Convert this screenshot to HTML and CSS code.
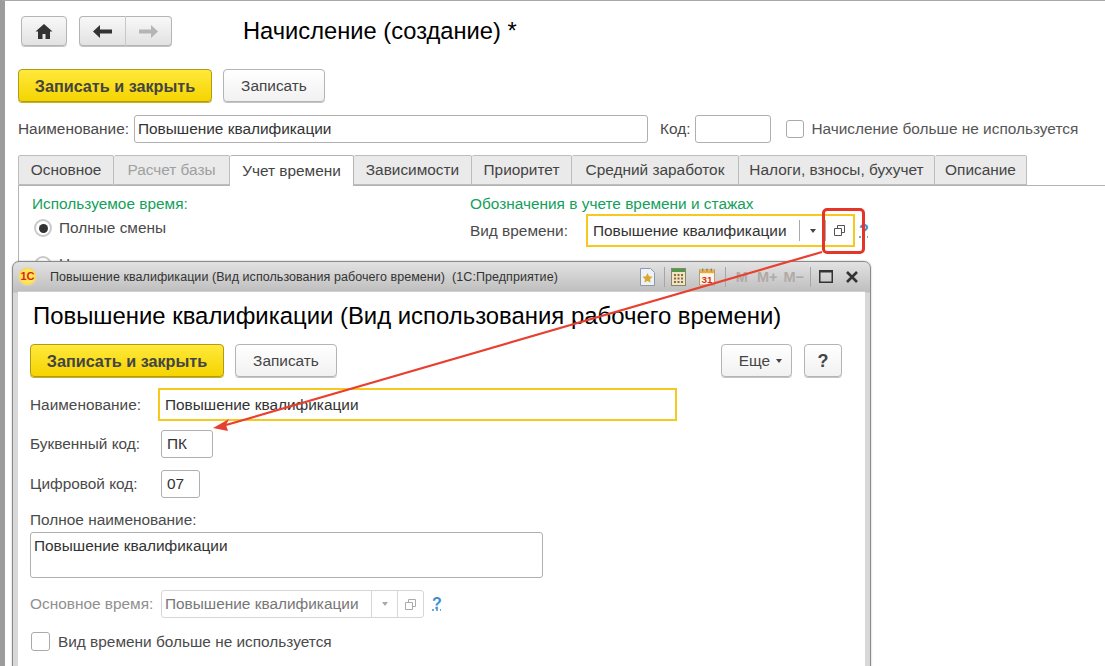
FILE: index.html
```html
<!DOCTYPE html>
<html lang="ru">
<head>
<meta charset="utf-8">
<title>Начисление</title>
<link rel="stylesheet" href="styles.css">
</head>
<body>
<main class="page">
  <div class="nav">
    <button class="btn nav-home"><svg width="18" height="15" viewBox="0 0 18 15"><path d="M9 0 L17.5 7.5 H15 V15 H10.5 V10 H7.5 V15 H3 V7.5 H.5 Z" fill="#333"/></svg></button>
    <div class="nav-group">
      <button class="btn nav-arrow"><svg width="19" height="13" viewBox="0 0 19 13"><path d="M0 6.5 L7 0 V4.500 H19 V8.500 H7 V13 Z" fill="#333"/></svg></button>
      <button class="btn nav-arrow"><svg width="19" height="13" viewBox="0 0 19 13"><path d="M19 6.500 L12 0 V4.500 H0 V8.500 H12 V13 Z" fill="#b5b5b5"/></svg></button>
    </div>
    <h1 class="title main-title">Начисление (создание) *</h1>
  </div>
  <div class="actions">
    <button class="btn primary wide">Записать и закрыть</button>
    <button class="btn plain save">Записать</button>
  </div>
  <div class="name-row">
    <label class="lbl">Наименование:</label>
    <div class="input name-input">Повышение квалификации</div>
    <label class="lbl code-lbl">Код:</label>
    <div class="input code-input"></div>
    <span class="check main-check"></span>
    <span class="lbl muted-lbl">Начисление больше не используется</span>
  </div>
  <div class="tabs">
    <div class="tab t1">Основное</div>
    <div class="tab t2 off">Расчет базы</div>
    <div class="tab t3 on">Учет времени</div>
    <div class="tab t4">Зависимости</div>
    <div class="tab t5">Приоритет</div>
    <div class="tab t6">Средний заработок</div>
    <div class="tab t7">Налоги, взносы, бухучет</div>
    <div class="tab t8">Описание</div>
  </div>
  <div class="panel">
    <section class="col-left">
      <div class="green">Используемое время:</div>
      <div class="radio-row"><span class="radio sel"></span><span class="lbl">Полные смены</span></div>
      <div class="radio-row second"><span class="radio"></span><span class="lbl">Н</span></div>
    </section>
    <section class="col-right">
      <div class="green">Обозначения в учете времени и стажах</div>
      <div class="kind-row">
        <span class="lbl kind-lbl">Вид времени:</span>
        <div class="kind-field">
          <span class="kind-text">Повышение квалификации</span>
          <span class="cell"><span class="caret"></span></span>
          <span class="cell open"><svg class="open-ico" width="11" height="11" viewBox="0 0 11 11"><path d="M3.500 3V.5h7v7H8M.5 3.500h7v7h-7z" fill="#fff" stroke="#555"/></svg></span>
        </div>
        <a class="help">?</a>
      </div>
    </section>
  </div>
</main>

<div class="mark"></div>

<section class="win">
  <header class="win-bar">
    <span class="logo">1С</span>
    <span class="win-title">Повышение квалификации (Вид использования рабочего времени)&nbsp; (1С:Предприятие)</span>
    <div class="win-tools">
      <svg class="tool star" width="15" height="18" viewBox="0 0 15 18"><path d="M.5.5h10l4 4v13H.5z" fill="#eef2f7" stroke="#8d99a8"/><path d="M7.500 5l1.600 3.300 3.400.5-2.500 2.400.6 3.400-3.100-1.600-3.100 1.600.6-3.400L2.500 8.800l3.400-.5z" fill="#d9a92f"/></svg>
      <span class="sep"></span>
      <svg class="tool calc" width="15" height="18" viewBox="0 0 15 18"><rect x=".5" y=".5" width="14" height="17" fill="#efe4c3" stroke="#8b8468"/><rect x="1" y="1" width="13" height="3" fill="#4e9a4a"/><path d="M3 6h2v2H3zM6.500 6h2v2h-2zM10 6h2v2h-2zM3 9.500h2v2H3zM6.500 9.500h2v2h-2zM10 9.500h2v2h-2zM3 13h2v2H3zM6.500 13h2v2h-2zM10 13h2v2h-2z" fill="#8d6a3c"/></svg>
      <svg class="tool cal" width="16" height="19" viewBox="0 0 17 19"><rect x=".5" y="2.500" width="16" height="16" fill="#fdf6e8" stroke="#b09a70"/><rect x="1" y="3" width="15" height="3" fill="#e6ad3c"/><path d="M4 1v3M8.500 1v3M13 1v3" stroke="#8a6a30"/><text x="8.500" y="16.500" class="cal-num">31</text></svg>
      <span class="sep"></span>
      <span class="mem m1">M</span><span class="mem">M+</span><span class="mem">M−</span>
      <span class="sep"></span>
      <svg class="tool max" width="14" height="13" viewBox="0 0 14 13"><path d="M.75.750h12.500v11.500H.75z" fill="none" stroke="#333" stroke-width="1.500"/><path d="M1 1.500h12" stroke="#333" stroke-width="2"/></svg>
      <svg class="tool x" width="12" height="12" viewBox="0 0 12 12"><path d="M1 1l10 10M11 1L1 11" stroke="#333" stroke-width="2.600"/></svg>
    </div>
  </header>
  <div class="win-body">
    <h2 class="title win-head">Повышение квалификации (Вид использования рабочего времени)</h2>
    <div class="win-actions">
      <button class="btn primary wide">Записать и закрыть</button>
      <button class="btn plain save">Записать</button>
      <span class="spacer"></span>
      <button class="btn plain more">Еще <span class="caret"></span></button>
      <button class="btn plain q">?</button>
    </div>
    <div class="f-row r-name"><label class="lbl f-lbl">Наименование:</label><div class="input active w-name">Повышение квалификации</div></div>
    <div class="f-row r-code"><label class="lbl f-lbl f2">Буквенный код:</label><div class="input w-code">ПК</div></div>
    <div class="f-row r-num"><label class="lbl f-lbl f2">Цифровой код:</label><div class="input w-num">07</div></div>
    <label class="lbl full-lbl">Полное наименование:</label>
    <div class="input full">Повышение квалификации</div>
    <div class="f-row r-main">
      <label class="lbl f-lbl f2 gray">Основное время:</label>
      <div class="dis-field">
        <span class="dis-text">Повышение квалификации</span>
        <span class="dis-cell c1"><span class="caret pale"></span></span>
        <span class="dis-cell c2"><svg width="11" height="11" viewBox="0 0 11 11"><path d="M3.500 3V.5h7v7H8M.5 3.500h7v7h-7z" fill="#fff" stroke="#aaa"/></svg></span>
      </div>
      <a class="help small">?</a>
    </div>
    <div class="f-row r-check"><span class="check"></span><span class="lbl">Вид времени больше не используется</span></div>
  </div>
</section>

<svg class="arrow" width="1105" height="666" viewBox="0 0 1105 666">
  <path d="M822 252 L226 425" stroke="#e8402f" stroke-width="2.200" fill="none"/>
  <path d="M213 428 L229 419 L226 425 L228 431 Z" fill="#e8402f"/>
</svg>
</body>
</html>
```
FILE: styles.css
```css
* { box-sizing: border-box; }
html, body { margin: 0; height: 100%; }
body {
  width: 1105px; height: 666px; overflow: hidden; position: relative;
  background: #fff; color: #444;
  font: 15.400px/18px "Liberation Sans", Arial, sans-serif;
  border-left: 5px solid #9c9c9c; border-top: 1px solid #a8a8a8;
}
body::before {
  content: ""; position: absolute; left: -5px; top: -1px; bottom: 0; width: 3px; background: #757575;
}
.page { padding: 15px 0 0 13px; }
button { font: inherit; color: inherit; padding: 0; }
.btn {
  display: inline-flex; align-items: center; justify-content: center;
  border: 1px solid #b4b4b4; border-radius: 4px;
  background: linear-gradient(#fff, #ececec);
  box-shadow: 0 1px 0 #c4c4c4;
}
.nav { display: flex; align-items: center; height: 30px; padding-left: 3px; }
.nav-home { width: 46px; height: 30px; background: linear-gradient(#f8f8f8, #e2e2e2); }
.nav-group { display: flex; margin-left: 12px; }
.nav-arrow { width: 47px; height: 30px; background: linear-gradient(#f8f8f8, #e2e2e2); }
.nav-arrow:first-child { border-radius: 4px 0 0 4px; border-right: 1px solid #c8c8c8; }
.nav-arrow:last-child { border-radius: 0 4px 4px 0; border-left: 0; width: 46px; }
.title { margin: 0; font-weight: 400; font-size: 23.700px; line-height: 28px; color: #000; }
.main-title { margin-left: 71px; }
.actions { display: flex; margin-top: 23px; gap: 11px; }
.primary {
  background: linear-gradient(#ffe93c, #f5d400); border-color: #b09a18;
  font-weight: 700; color: #444; box-shadow: 0 1px 0 #c8b020; font-size: 16.200px;
}
.wide { width: 194px; height: 33px; }
.plain { background: linear-gradient(#fff, #f1f1f1); }
.save { width: 102px; height: 33px; }
.name-row { display: flex; align-items: center; margin-top: 13px; height: 28px; }
.lbl { white-space: nowrap; color: #4a4a4a; }
.input {
  border: 1px solid #b0b0b0; border-radius: 3px; background: #fff; color: #333;
  display: flex; align-items: center; padding-left: 3px; height: 28px; white-space: nowrap;
}
.name-input { width: 514px; margin-left: 5px; }
.code-lbl { margin-left: 12px; }
.code-input { width: 76px; margin-left: 5px; }
.check {
  width: 18px; height: 18px; border: 1px solid #aaa; border-radius: 3px;
  background: #fff; display: block; flex: none;
}
.main-check { margin-left: 15px; }
.muted-lbl { margin-left: 7px; color: #555; }
.tabs { display: flex; margin-top: 12px; height: 31px; border-bottom: 1px solid #b4b4b4; margin-right: 0; }
.tab {
  border: 1px solid #bdbdbd; border-left: 0; background: #eaeaea; height: 30px;
  display: flex; align-items: center; justify-content: center; border-radius: 2px 2px 0 0; color: #444;
}
.t1 { width: 96px; border-left: 1px solid #bdbdbd; }
.t2 { width: 116px; }
.t3 { width: 124px; }
.t4 { width: 118px; }
.t5 { width: 100px; }
.t6 { width: 167px; }
.t7 { width: 196px; }
.t8 { width: 92px; }
.off { color: #a0a0a0; }
.on { background: #fff; height: 31px; border-bottom: 0; border-color: #b4b4b4; position: relative; }
.panel {
  display: flex; height: 200px; border-left: 1px solid #b4b4b4;
  padding: 9px 0 0 13px;
}
.green { color: #13a05a; line-height: 18px; }
.col-left { width: 438px; }
.radio-row { display: flex; align-items: center; gap: 7px; margin-top: 6px; padding-left: 2px; }
.radio-row.second { margin-top: 19px; }
.second .lbl { line-height: 12px; margin-bottom: 2px; }
.radio {
  width: 18px; height: 18px; border-radius: 50%; flex: none; background: #fff;
  border: 2px solid #c9c9c9; display: flex; align-items: center; justify-content: center;
}
.sel::after { content: ""; width: 9px; height: 9px; border-radius: 50%; background: #333; }
.kind-row { display: flex; align-items: center; margin-top: 1px; margin-left: -1px; }
.kind-lbl { width: 117px; padding-left: 1px; }
.kind-field {
  width: 269px; height: 33px; border: 2px solid #f7c81e; display: flex; align-items: center; background: #fff;
}
.kind-text { width: 211px; padding-left: 5px; color: #333; white-space: nowrap; }
.cell { height: 21px; border-left: 1px solid #aaa; width: 26px; display: flex; align-items: center; justify-content: center; }
.cell.open { width: 28px; }
.caret {
  display: inline-block; width: 0; height: 0;
  border: 3.500px solid transparent; border-top: 4px solid #444; border-bottom: 0;
}
.caret.pale { border-top-color: #aaa; }
.help { color: #3a8fd0; font-weight: 700; margin-left: 4px; text-decoration: underline dotted; font-size: 16px; }
.mark {
  position: absolute; left: 817px; top: 207px; width: 43px; height: 46px;
  border: 3px solid #e53528; border-radius: 5px; z-index: 3;
}
.win {
  position: absolute; left: 7px; top: 260px; width: 859px; height: 410px; z-index: 2;
  background: linear-gradient(#e2e2e2, #bebebe 30px, #d8d8d8 31px);
  border: 1px solid #8a8a8a; border-radius: 7px 7px 0 0; padding: 0 5px;
  box-shadow: 0 0 2px rgba(0,0,0,.3);
}
.win-bar { display: flex; align-items: center; height: 29px; margin-left: -5px; padding: 0 3px 0 5px; }
.logo {
  width: 19px; height: 19px; border-radius: 50%; background: radial-gradient(#ffe75a 55%, #f0b01e);
  color: #d9251a; font-weight: 700; font-size: 11px; line-height: 17px; text-align: center; flex: none;
  border: 1px solid #e0d6c8;
}
.win-title { margin-left: 13px; font-size: 12.500px; color: #333; white-space: nowrap; flex: 1; letter-spacing: .06px; }
.win-tools { display: flex; align-items: center; }
.tool { flex: none; }
.star { margin-right: 6px; }
.calc { margin-left: 3px; margin-right: 5px; }
.cal { margin-left: 8px; margin-right: 7px; }
.max { margin-left: 5px; margin-right: 5px; }
.x { margin-left: 8px; margin-right: 4px; }
.cal-num { font: 700 10.500px "Liberation Sans", sans-serif; fill: #d7331f; text-anchor: middle; }
.sep { width: 1px; height: 20px; background: #a6a6a6; margin: 0 3px; }
.mem { color: #b0aaa6; font-weight: 700; font-size: 14.500px; margin: 0 3px; }
.m1 { margin-left: 7px; margin-right: 6px; }
.win-body { background: #fff; height: 376px; padding: 10px 0 0 12px; border-top: 1px solid #cfcfcf; }
.win-head { white-space: nowrap; padding-left: 3px; font-size: 23.900px; }
.win-actions { display: flex; gap: 11px; margin-top: 14px; padding-right: 23px; align-items: center; }
.spacer { flex: 1; }
.more { width: 71px; height: 33px; gap: 6px; padding-left: 8px; }
.q { width: 38px; height: 33px; font-weight: 700; font-size: 18px; margin-left: 1px; }
.f-row { display: flex; align-items: center; }
.f-lbl { width: 128px; flex: none; }
.f2 { width: 131px; }
.r-name { margin-top: 11px; }
.active { border: 2px solid #f7c81e; border-radius: 0; padding-left: 5px; height: 33px; }
.w-name { width: 519px; }
.r-code { margin-top: 9px; }
.w-code { width: 52px; padding-left: 5px; }
.r-num { margin-top: 12px; }
.w-num { width: 39px; padding-left: 5px; }
.full-lbl { display: block; margin-top: 13px; }
.full { width: 513px; height: 46px; margin-top: 3px; align-items: flex-start; padding-top: 4px; }
.r-main { margin-top: 12px; }
.gray { color: #909090; }
.dis-field {
  width: 263px; height: 28px; border: 1px solid #d6d6d6; border-radius: 3px;
  display: flex; align-items: stretch;
}
.dis-text { width: 209px; padding-left: 3px; color: #777; white-space: nowrap; align-self: center; }
.dis-cell { border-left: 1px solid #d6d6d6; display: flex; align-items: center; justify-content: center; }
.c1 { width: 26px; }
.c2 { width: 26px; }
.small { margin-left: 8px; }
.r-check { margin-top: 14px; gap: 8px; padding-left: 1px; }
.r-check .check { width: 19px; height: 19px; }
.arrow { position: absolute; left: -5px; top: -1px; z-index: 4; pointer-events: none; }
```
